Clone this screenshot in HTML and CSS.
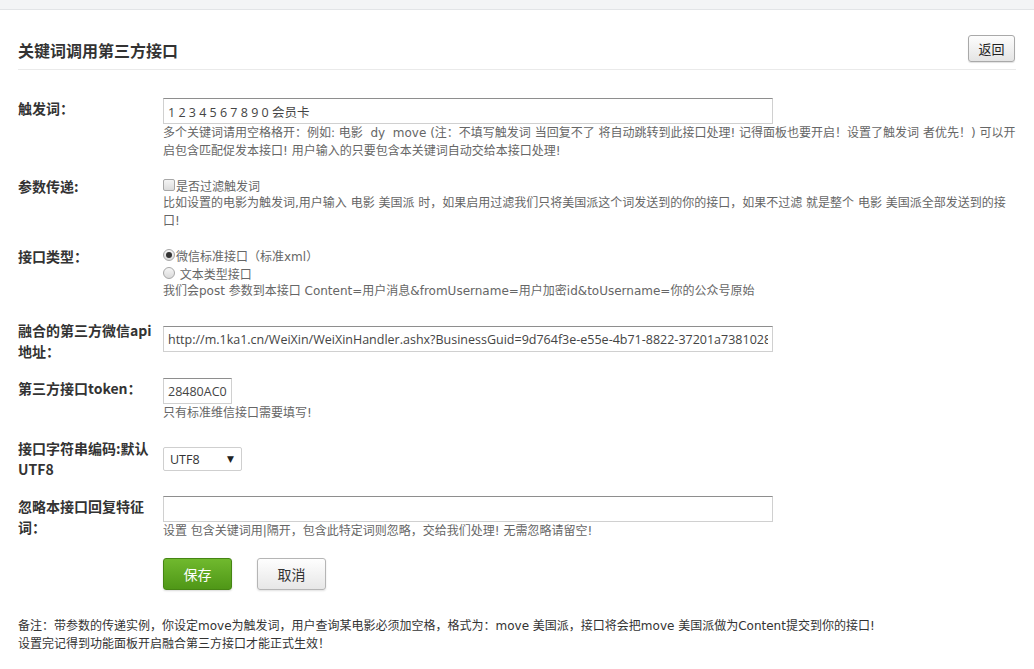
FILE: index.html
```html
<!DOCTYPE html>
<html lang="zh-CN">
<head>
    <meta charset="UTF-8">
    <title>关键词调用第三方接口</title>
    <link rel="stylesheet" href="styles.css">
</head>
<body>
    <div class="topbar"></div>

    <div class="page">
        <div class="page-header">
            <h2>关键词调用第三方接口</h2>
            <button class="btn-back">返回</button>
        </div>

        <div class="form">
            <div class="row">
                <div class="label">触发词：</div>
                <div class="field">
                    <input type="text" class="text-wide" value="1 2 3 4 5 6 7 8 9 0 会员卡">
                    <p class="help">多个关键词请用空格格开：例如: 电影&nbsp;&nbsp;dy&nbsp;&nbsp;move (注：不填写触发词 当回复不了 将自动跳转到此接口处理! 记得面板也要开启！设置了触发词 者优先！) 可以开启包含匹配促发本接口! 用户输入的只要包含本关键词自动交给本接口处理!</p>
                </div>
            </div>

            <div class="row">
                <div class="label">参数传递:</div>
                <div class="field">
                    <label class="opt"><span class="check"></span>是否过滤触发词</label>
                    <p class="help">比如设置的电影为触发词,用户输入 电影 美国派 时，如果启用过滤我们只将美国派这个词发送到的你的接口，如果不过滤 就是整个 电影 美国派全部发送到的接口!</p>
                </div>
            </div>

            <div class="row">
                <div class="label">接口类型：</div>
                <div class="field">
                    <label class="opt"><span class="radio on"></span>微信标准接口（标准xml）</label>
                    <label class="opt"><span class="radio"></span>&nbsp;文本类型接口</label>
                    <p class="help">我们会post 参数到本接口 Content=用户消息&amp;fromUsername=用户加密id&amp;toUsername=你的公众号原始</p>
                </div>
            </div>

            <div class="row row-api">
                <div class="label">融合的第三方微信api地址：</div>
                <div class="field">
                    <input type="text" class="text-wide" value="http://m.1ka1.cn/WeiXin/WeiXinHandler.ashx?BusinessGuid=9d764f3e-e55e-4b71-8822-37201a73810289">
                </div>
            </div>

            <div class="row">
                <div class="label">第三方接口token：</div>
                <div class="field">
                    <input type="text" class="text-short" value="28480AC09F1A">
                    <p class="help">只有标准维信接口需要填写!</p>
                </div>
            </div>

            <div class="row row-charset">
                <div class="label">接口字符串编码:默认UTF8</div>
                <div class="field">
                    <div class="select">UTF8<span class="caret">▼</span></div>
                </div>
            </div>

            <div class="row">
                <div class="label">忽略本接口回复特征词：</div>
                <div class="field">
                    <input type="text" class="text-wide" value="">
                    <p class="help">设置 包含关键词用|隔开，包含此特定词则忽略，交给我们处理! 无需忽略请留空!</p>
                </div>
            </div>

            <div class="row actions">
                <div class="label"></div>
                <div class="field">
                    <button class="btn-save">保存</button>
                    <button class="btn-cancel">取消</button>
                </div>
            </div>
        </div>

        <div class="notes">
            <p>备注：带参数的传递实例，你设定move为触发词，用户查询某电影必须加空格，格式为：move 美国派，接口将会把move 美国派做为Content提交到你的接口!</p>
            <p>设置完记得到功能面板开启融合第三方接口才能正式生效！</p>
        </div>
    </div>
</body>
</html>
```

FILE: styles.css
```css
* {
    margin: 0;
    padding: 0;
    box-sizing: border-box;
}

body {
    background: #fff;
    color: #333;
    font-family: "DejaVu Sans", "Noto Sans CJK SC", sans-serif;
    font-size: 12px;
}

.topbar {
    height: 10px;
    background: #f3f4f6;
    border-bottom: 1px solid #e2e4e7;
}

.page {
    padding: 0 18px;
}

.page-header {
    display: flex;
    align-items: center;
    justify-content: space-between;
    height: 60px;
    padding-top: 20px;
    border-bottom: 1px solid #eaeaea;
}

.page-header h2 {
    font-size: 16px;
    font-weight: bold;
    color: #333;
    font-family: "Noto Sans CJK SC", sans-serif;
}

.btn-back {
    width: 47px;
    height: 27px;
    margin-right: 1px;
    margin-top: -2px;
    font-family: "Noto Sans CJK SC", sans-serif;
    font-size: 13px;
    color: #222;
    background: linear-gradient(#fdfdfd, #e4e4e4);
    border: 1px solid #a9a9a9;
    border-radius: 3px;
    box-shadow: 0 1px 1px rgba(0,0,0,0.12);
}

.form {
    padding-top: 28px;
}

.row {
    display: flex;
    align-items: flex-start;
    margin-bottom: 16px;
}

.label {
    width: 145px;
    flex: none;
    padding-right: 6px;
    font-family: "Noto Sans CJK SC", sans-serif;
    font-size: 14px;
    font-weight: bold;
    line-height: 21px;
    color: #333;
}

.field {
    flex: 1;
}

input[type="text"] {
    display: block;
    height: 26px;
    padding: 0 4px;
    font-family: "Open Sans", "Noto Sans CJK SC", sans-serif;
    font-size: 12.5px;
    color: #444;
    background: #fff;
    border: 1px solid #d0d0d0;
    border-top-color: #8e8e8e;
    border-radius: 0;
    outline: none;
}

.text-wide {
    width: 610px;
}

.text-short {
    width: 69px;
}

.help {
    font-size: 12px;
    line-height: 18px;
    color: #666;
}

.opt {
    display: flex;
    align-items: center;
    height: 18px;
    font-size: 12px;
    color: #666;
}

.check {
    width: 12px;
    height: 12px;
    margin-right: 1px;
    border: 1px solid #a7a7a7;
    border-radius: 2px;
    background: linear-gradient(#f4f4f4, #dcdcdc);
}

.radio {
    position: relative;
    width: 12px;
    height: 12px;
    margin-right: 1px;
    border: 1px solid #a7a7a7;
    border-radius: 50%;
    background: linear-gradient(#f6f6f6, #dadada);
}

.radio.on::after {
    content: "";
    position: absolute;
    left: 2px;
    top: 2px;
    width: 6px;
    height: 6px;
    border-radius: 50%;
    background: #333;
}

.row-api {
    margin-top: 20px;
}

.row-api input {
    margin-top: 6px;
}

.row-charset .select {
    margin-top: 9px;
}

.select {
    display: flex;
    align-items: center;
    justify-content: space-between;
    width: 79px;
    height: 24px;
    padding: 0 7px 0 6px;
    font-family: "Open Sans", sans-serif;
    font-size: 12.5px;
    color: #333;
    border: 1px solid #cfcfcf;
    border-radius: 2px;
}

.caret {
    font-family: "DejaVu Sans", sans-serif;
    font-size: 9px;
    color: #222;
}

.actions {
    margin-top: 18px;
}

.actions .field {
    display: flex;
    gap: 25px;
}

.btn-save,
.btn-cancel {
    width: 69px;
    height: 32px;
    font-family: "Noto Sans CJK SC", sans-serif;
    font-size: 14px;
    border-radius: 3px;
}

.btn-save {
    color: #fff;
    background: linear-gradient(#70b92e, #4f9717);
    border: 1px solid #458513;
    box-shadow: 0 1px 2px rgba(0,0,0,0.15);
}

.btn-cancel {
    color: #333;
    background: linear-gradient(#fefefe, #e7e7e7);
    border: 1px solid #b5b5b5;
    box-shadow: 0 1px 2px rgba(0,0,0,0.12);
}

.notes {
    margin-top: 27px;
    font-size: 12px;
    line-height: 18px;
    color: #333;
}
```
